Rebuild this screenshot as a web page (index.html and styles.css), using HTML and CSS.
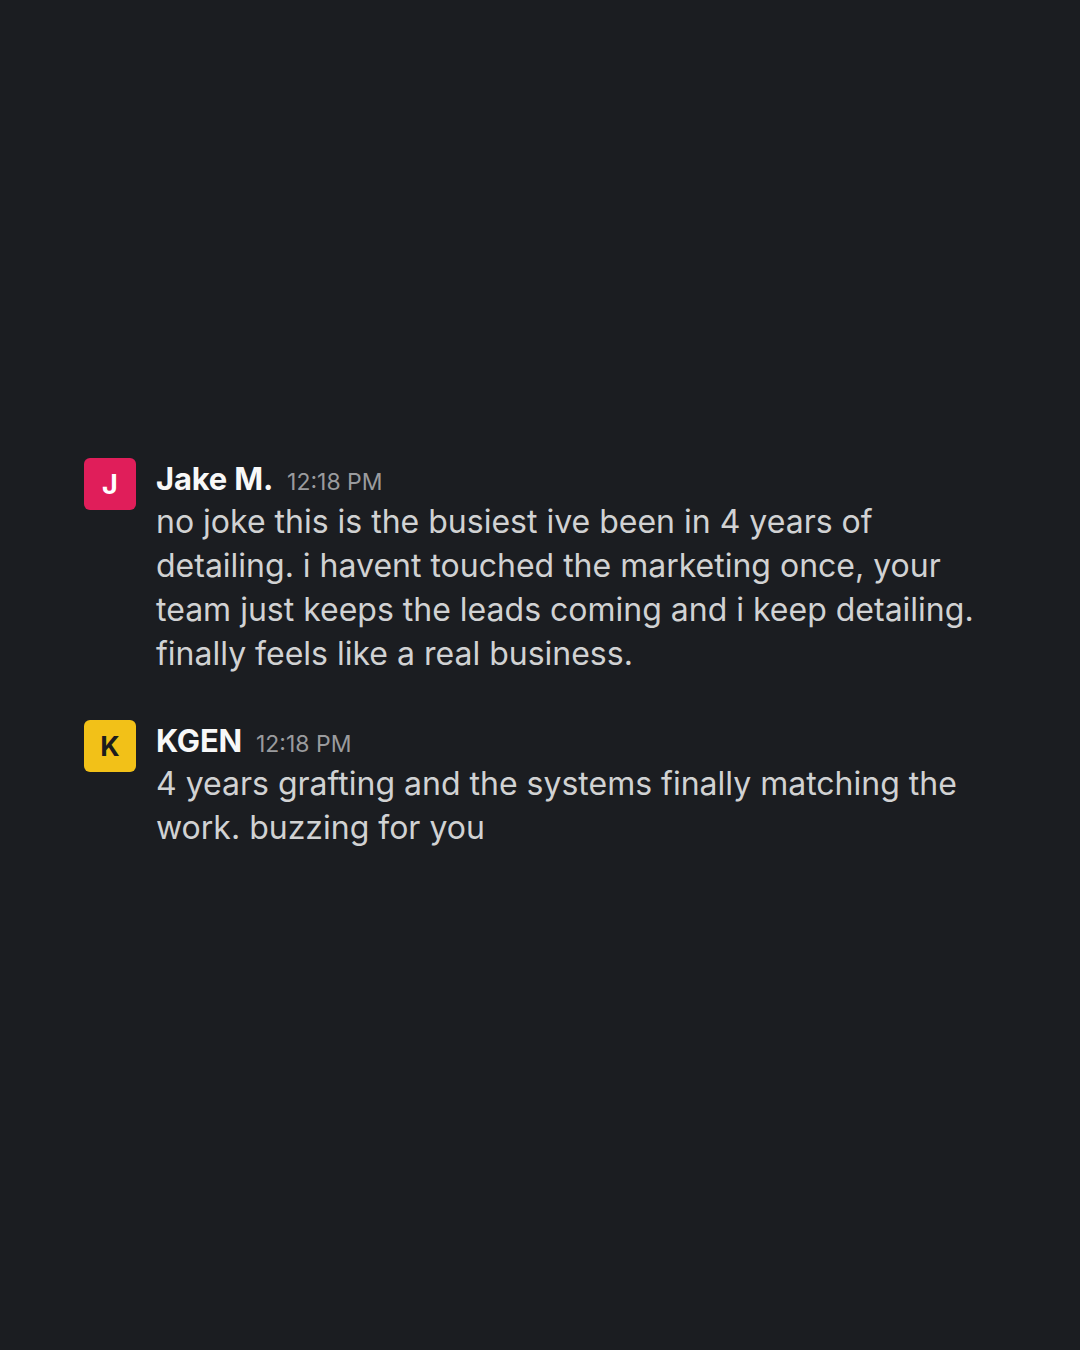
FILE: index.html
```html
<!DOCTYPE html>
<html lang="en">
<head>
<meta charset="utf-8">
<title>Messages</title>
<link rel="stylesheet" href="styles.css">
</head>
<body>
<main class="thread">
  <article class="msg">
    <div class="avatar avatar-pink">J</div>
    <div class="msg-body">
      <header class="msg-head">
        <span class="name">Jake M.</span>
        <span class="time">12:18 PM</span>
      </header>
      <p class="text">no joke this is the busiest ive been in 4 years of detailing. i havent touched the marketing once, your team just keeps the leads coming and i keep detailing. finally feels like a real business.</p>
    </div>
  </article>
  <article class="msg">
    <div class="avatar avatar-yellow">K</div>
    <div class="msg-body">
      <header class="msg-head">
        <span class="name">KGEN</span>
        <span class="time">12:18 PM</span>
      </header>
      <p class="text">4 years grafting and the systems finally matching the work. buzzing for you</p>
    </div>
  </article>
</main>
</body>
</html>
```
FILE: styles.css
```css
html, body {
  margin: 0;
  padding: 0;
  background: #1b1d21;
}

body {
  width: 1080px;
  height: 1350px;
  font-family: Inter, "Noto Sans", sans-serif;
  color: #d1d2d3;
}

.thread {
  display: flex;
  flex-direction: column;
  gap: 44px;
  padding: 458px 100px 0 84px;
}

.msg {
  display: flex;
  gap: 20px;
  align-items: flex-start;
}

.avatar {
  flex: none;
  width: 52px;
  height: 52px;
  border-radius: 6px;
  display: flex;
  align-items: center;
  justify-content: center;
  font-size: 27px;
  font-weight: 700;
}

.avatar-pink {
  background: #e01e5a;
  color: #ffffff;
}

.avatar-yellow {
  background: #f2c118;
  color: #1d1c1d;
}

.msg-body {
  flex: 1;
}

.msg-head {
  display: flex;
  align-items: baseline;
  gap: 14px;
  height: 42px;
  line-height: 41px;
}

.name {
  font-size: 31px;
  font-weight: 700;
  color: #f8f8f8;
  letter-spacing: -0.2px;
}

.time {
  font-size: 23px;
  color: #9a9b9e;
}

.text {
  margin: 0;
  font-size: 32px;
  line-height: 44px;
  color: #d1d2d3;
}
```
